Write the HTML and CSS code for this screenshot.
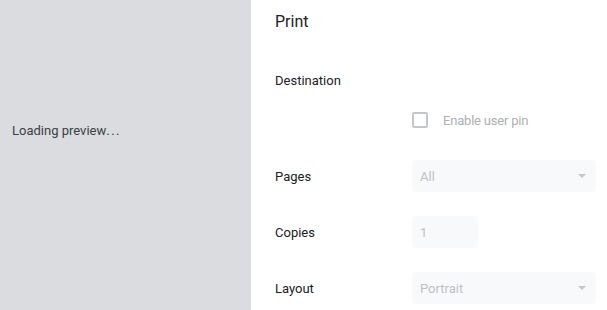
FILE: index.html
```html
<!DOCTYPE html>
<html lang="en">
<head>
    <meta charset="UTF-8">
    <title>Print</title>
    <link rel="stylesheet" href="styles.css">
</head>
<body>
    <div class="app">
        <div class="preview-area">
            <span class="preview-message">Loading preview<span class="dots">...</span></span>
        </div>

        <div class="sidebar">
            <h1 class="title">Print</h1>

            <div class="row row-destination">
                <span class="label">Destination</span>
            </div>

            <div class="row row-pin">
                <span class="label"></span>
                <label class="checkbox">
                    <span class="box"></span>
                    <span class="checkbox-text">Enable user pin</span>
                </label>
            </div>

            <div class="row">
                <span class="label">Pages</span>
                <div class="select">
                    <span>All</span>
                    <span class="arrow"></span>
                </div>
            </div>

            <div class="row">
                <span class="label">Copies</span>
                <div class="number-input">1</div>
            </div>

            <div class="row">
                <span class="label">Layout</span>
                <div class="select">
                    <span>Portrait</span>
                    <span class="arrow"></span>
                </div>
            </div>
        </div>
    </div>
</body>
</html>
```

FILE: styles.css
```css
body {
    margin: 0;
    font-family: Roboto, "Liberation Sans", Arial, sans-serif;
    font-size: 13px;
    color: #202124;
    background-color: #ffffff;
}

.app {
    display: flex;
    height: 310px;
    overflow: hidden;
}

.preview-area {
    width: 251px;
    flex-shrink: 0;
    background-color: #dadce0;
    padding: 123px 0 0 12px;
    box-sizing: border-box;
}

.preview-message {
    color: #3c4043;
    font-size: 13px;
}

.dots {
    letter-spacing: 1.5px;
}

.sidebar {
    flex: 1;
    padding: 0 11px 0 24px;
}

.title {
    margin: 0;
    font-size: 16px;
    font-weight: normal;
    line-height: 44px;
    color: #202124;
}

.row {
    display: flex;
    align-items: center;
    height: 32px;
    margin-top: 24px;
}

.row-destination {
    margin-top: 20px;
}

.row-pin {
    margin-top: 8px;
}

.label {
    width: 137px;
    flex-shrink: 0;
}

.checkbox {
    display: flex;
    align-items: center;
    gap: 15px;
    color: #acafb3;
    letter-spacing: -0.2px;
}

.box {
    width: 12px;
    height: 12px;
    border: 2px solid #c4c7ca;
    border-radius: 2px;
}

.select {
    flex: 1;
    height: 32px;
    background-color: #f8f9fa;
    border-radius: 4px;
    display: flex;
    align-items: center;
    justify-content: space-between;
    padding: 0 10px 0 8px;
    color: #bdc1c6;
}

.arrow {
    width: 0;
    height: 0;
    border-left: 4px solid transparent;
    border-right: 4px solid transparent;
    border-top: 4px solid #c4c7ca;
}

.number-input {
    width: 66px;
    height: 32px;
    box-sizing: border-box;
    background-color: #f8f9fa;
    border-radius: 4px;
    display: flex;
    align-items: center;
    padding-left: 8px;
    color: #bdc1c6;
}
```
